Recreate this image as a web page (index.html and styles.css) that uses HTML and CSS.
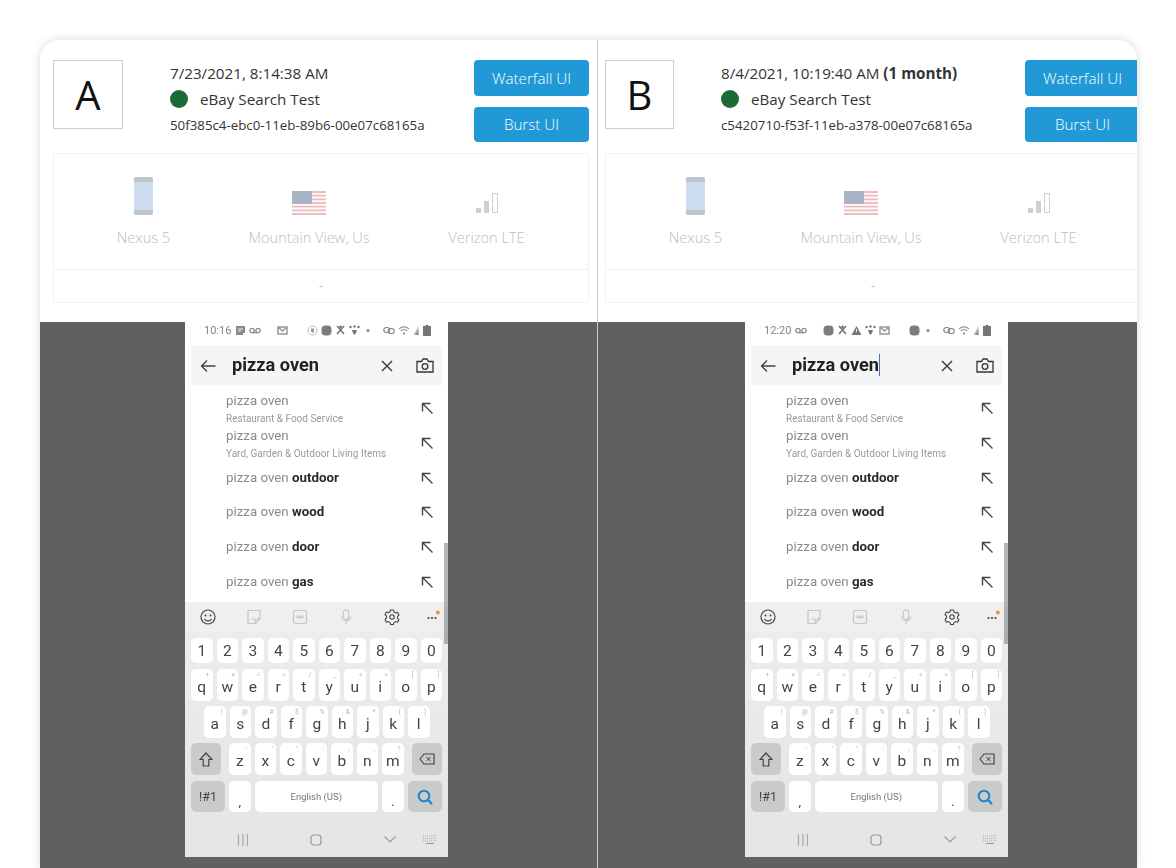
FILE: index.html
```html
<!DOCTYPE html>
<html lang="en">
  <head>
    <meta charset="UTF-8" />
    <meta name="viewport" content="width=device-width, initial-scale=1.0" />
    <title>Compare tests</title>
    <link rel="stylesheet" href="styles.css">
  </head>
  <body>
    <!-- Shared icons -->
    <svg class="icon-defs" aria-hidden="true">
      <symbol id="i-doc" viewBox="0 0 11 11"><path d="M1 1h9v7H8v2H1z" fill="#8a8a8a"/><path d="M3 4h5M3 6h3" stroke="#eee"/></symbol>
      <symbol id="i-vm" viewBox="0 0 12 11"><circle cx="3" cy="5.5" r="2.2" fill="none" stroke="#888" stroke-width="1.2"/><circle cx="9" cy="5.5" r="2.2" fill="none" stroke="#888" stroke-width="1.2"/><path d="M3 7.7h6" stroke="#888" stroke-width="1.2"/></symbol>
      <symbol id="i-mail" viewBox="0 0 11 11"><path d="M1 2h9v7H1zM1 2l4.5 4L10 2" fill="none" stroke="#999" stroke-width="1.5"/></symbol>
      <symbol id="i-shield" viewBox="0 0 11 11"><circle cx="5.5" cy="5.5" r="4.5" fill="none" stroke="#bbb"/><path d="M4 3.5h3v3L5.5 8 4 6.500z" fill="#999"/></symbol>
      <symbol id="i-blob" viewBox="0 0 11 11"><rect x="0.500" y="0.500" width="10" height="10" rx="4" fill="#7c7c7c"/></symbol>
      <symbol id="i-cross" viewBox="0 0 11 11"><path d="M2 1l7 8M9 1L2 9" stroke="#777" stroke-width="1.6"/><circle cx="5.500" cy="2" r="1.400" fill="#777"/></symbol>
      <symbol id="i-paw" viewBox="0 0 11 11"><path d="M3 5h5l-1 3-1.500 2L4 8z" fill="#777"/><circle cx="1.500" cy="2" r="1.200" fill="#777"/><circle cx="5.500" cy="1.500" r="1.200" fill="#777"/><circle cx="9.500" cy="2" r="1.200" fill="#777"/></symbol>
      <symbol id="i-warn" viewBox="0 0 11 11"><path d="M5.500 1L10.500 10h-10z" fill="#777"/><path d="M5.500 4v3" stroke="#eee"/></symbol>
      <symbol id="i-dot" viewBox="0 0 4 11"><circle cx="2" cy="5.500" r="1.500" fill="#888"/></symbol>
      <symbol id="i-link" viewBox="0 0 12 11"><rect x="0.800" y="2.500" width="6" height="5" rx="2.500" fill="none" stroke="#888" stroke-width="1.200"/><rect x="5.200" y="3.500" width="6" height="5" rx="2.500" fill="none" stroke="#888" stroke-width="1.200"/></symbol>
      <symbol id="i-wifi" viewBox="0 0 12 11"><path d="M1 4a7 7 0 0 1 10 0M2.800 6a4.500 4.500 0 0 1 6.400 0" fill="none" stroke="#999" stroke-width="1.200"/><circle cx="6" cy="8.500" r="1.200" fill="#999"/></symbol>
      <symbol id="i-bars" viewBox="0 0 6 11"><path d="M5.500 1v9H0.500z" fill="#bbb"/><path d="M5.500 5v5H2.500z" fill="#888"/></symbol>
      <symbol id="i-batt" viewBox="0 0 8 11"><path d="M2.500 0h3v1H8v10H0V1h2.500z" fill="#777"/></symbol>

      <symbol id="i-back" viewBox="0 0 16 14"><path d="M15.500 7H1.500M7 1.500L1.500 7 7 12.500" fill="none" stroke="#444" stroke-width="1.400"/></symbol>
      <symbol id="i-x" viewBox="0 0 12 12"><path d="M1 1l10 10M11 1L1 11" stroke="#444" stroke-width="1.500"/></symbol>
      <symbol id="i-camera" viewBox="0 0 18 15"><path d="M1 3.500h4.500L7 1h4l1.500 2.500H17V14H1z" fill="none" stroke="#333" stroke-width="1.300"/><circle cx="9" cy="8.500" r="2.800" fill="none" stroke="#333" stroke-width="1.300"/></symbol>
      <symbol id="i-fill" viewBox="0 0 12 12"><path d="M1 1.500h8.500M1.500 1v8.500M1.500 1.500l10 10" fill="none" stroke="#444" stroke-width="1.400"/></symbol>

      <symbol id="i-smile" viewBox="0 0 16 16"><circle cx="8" cy="8" r="7" fill="none" stroke="#444" stroke-width="1.200"/><circle cx="5.500" cy="6.500" r="1" fill="#444"/><circle cx="10.500" cy="6.500" r="1" fill="#444"/><path d="M4.500 10a4 4 0 0 0 7 0" fill="none" stroke="#444" stroke-width="1.200"/></symbol>
      <symbol id="i-sticker" viewBox="0 0 16 16"><path d="M2 1.500h12v8L9.500 14.500H2z" fill="none" stroke="#c6c6c6" stroke-width="1.200"/><path d="M5.500 9.500a3 3 0 0 0 4 0" fill="none" stroke="#c6c6c6"/><path d="M9 14v-3l5-2" fill="none" stroke="#c6c6c6"/></symbol>
      <symbol id="i-gif" viewBox="0 0 16 16"><rect x="1.500" y="1.500" width="13" height="13" rx="2" fill="none" stroke="#c6c6c6" stroke-width="1.200"/><path d="M4.500 8h7" stroke="#c6c6c6" stroke-width="3" stroke-dasharray="2 .5"/></symbol>
      <symbol id="i-mic" viewBox="0 0 16 18"><rect x="5" y="1" width="6" height="11" rx="3" fill="none" stroke="#c6c6c6" stroke-width="1.200"/><path d="M3 8.500a5 5 0 0 0 10 0M8 13.500V17" fill="none" stroke="#c6c6c6" stroke-width="1.200"/></symbol>
      <symbol id="i-gear" viewBox="0 0 16 16"><path d="M6.500 1h3l.4 2 1.700 1 2-.7 1.400 2.700-1.500 1.300v2l1.500 1.300-1.400 2.700-2-.7-1.700 1-.4 2h-3l-.4-2-1.700-1-2 .7-1.400-2.700L2.500 9V7L1 5.700 2.400 3l2 .7 1.700-1z" fill="none" stroke="#444" stroke-width="1.100" stroke-linejoin="round"/><circle cx="8" cy="8" r="2.200" fill="none" stroke="#444" stroke-width="1.100"/></symbol>
      <symbol id="i-more" viewBox="0 0 20 20"><circle cx="2.500" cy="11" r="1.100" fill="#444"/><circle cx="6" cy="11" r="1.100" fill="#444"/><circle cx="9.500" cy="11" r="1.100" fill="#444"/><circle cx="11.800" cy="5.500" r="2" fill="#e8923c"/></symbol>

      <symbol id="i-shift" viewBox="0 0 14 15"><path d="M7 1l6 6.500H9.800V14H4.200V7.500H1z" fill="none" stroke="#444" stroke-width="1.200"/></symbol>
      <symbol id="i-del" viewBox="0 0 16 12"><path d="M5 1h10v10H5L1 6z" fill="none" stroke="#444" stroke-width="1.200" stroke-linejoin="round"/><path d="M7.500 4l4 4M11.500 4l-4 4" stroke="#444"/></symbol>
      <symbol id="i-search" viewBox="0 0 16 16"><circle cx="7" cy="7" r="5.300" fill="none" stroke="#1f84c8" stroke-width="2"/><path d="M10.800 10.800L15 15" stroke="#1f84c8" stroke-width="2.200"/></symbol>

      <symbol id="i-recent" viewBox="0 0 12 14"><path d="M1.500 1v12M6 1v12M10.500 1v12" stroke="#aaa" stroke-width="1.200"/></symbol>
      <symbol id="i-home" viewBox="0 0 12 12"><rect x="1" y="1" width="10" height="10" rx="3" fill="none" stroke="#999" stroke-width="1.200"/></symbol>
      <symbol id="i-down" viewBox="0 0 12 7"><path d="M.5 .5L6 6l5.500-5.500" fill="none" stroke="#999" stroke-width="1.200"/></symbol>
      <symbol id="i-kbd" viewBox="0 0 14 9"><path d="M0 1h14M0 3.500h14M0 6h14" stroke="#aaa" stroke-dasharray="1 1"/><path d="M3 8.500h8" stroke="#999"/></symbol>

      <symbol id="i-device" viewBox="0 0 19 38"><rect width="19" height="38" rx="2" fill="#cddcee"/><path d="M0 5V2a2 2 0 0 1 2-2h15a2 2 0 0 1 2 2v3zM0 33h19v3a2 2 0 0 1-2 2H2a2 2 0 0 1-2-2z" fill="#c1c5cc"/></symbol>
      <symbol id="i-flag" viewBox="0 0 34 24">
        <rect width="34" height="24" fill="#fbfbfb"/>
        <path d="M0 1h34M0 4.700h34M0 8.400h34M0 12h34M0 15.700h34M0 19.400h34M0 23h34" stroke="#f0bcc0" stroke-width="1.800"/>
        <rect width="20" height="13" fill="#aab3c6"/>
      </symbol>
      <symbol id="i-signal" viewBox="0 0 22 20"><rect y="15" width="5" height="5" fill="#cfcfcf"/><rect x="8" y="8" width="5" height="12" fill="#cfcfcf"/><rect x="16.500" y=".5" width="5" height="19" fill="none" stroke="#cfcfcf"/></symbol>
    </svg>

    <main class="compare">
      <!-- Test A -->
      <section class="panel">
        <div class="panel__head">
          <div class="summary">
            <div class="summary__letter">A</div>
            <div class="summary__info">
              <p class="summary__line">7/23/2021, 8:14:38 AM</p>
              <p class="summary__line summary__line--name"><span class="summary__dot"></span>eBay Search Test</p>
              <p class="summary__line summary__line--id">50f385c4-ebc0-11eb-89b6-00e07c68165a</p>
            </div>
            <div class="summary__buttons">
              <button class="summary__button">Waterfall UI</button>
              <button class="summary__button">Burst UI</button>
            </div>
          </div>
          <div class="device">
            <div class="device__row">
              <div class="device__item">
                <div class="device__icon"><svg class="icon-phone"><use href="#i-device"/></svg></div>
                <span class="device__label">Nexus 5</span>
              </div>
              <div class="device__item">
                <div class="device__icon"><svg class="icon-flag"><use href="#i-flag"/></svg></div>
                <span class="device__label">Mountain View, Us</span>
              </div>
              <div class="device__item">
                <div class="device__icon device__icon--signal"><svg class="icon-signal"><use href="#i-signal"/></svg></div>
                <span class="device__label">Verizon LTE</span>
              </div>
            </div>
            <div class="device__foot">-</div>
          </div>
        </div>
        <div class="stage">
          <div class="phone">
            <div class="status">
              <span class="status__time">10:16</span>
              <svg class="st"><use href="#i-doc"/></svg>
              <svg class="st st--wide"><use href="#i-vm"/></svg>
              <svg class="st st--gap15"><use href="#i-mail"/></svg>
              <svg class="st st--gap19"><use href="#i-shield"/></svg>
              <svg class="st"><use href="#i-blob"/></svg>
              <svg class="st"><use href="#i-cross"/></svg>
              <svg class="st"><use href="#i-paw"/></svg>
              <svg class="st st--dot"><use href="#i-dot"/></svg>
              <div class="status__right">
                <svg class="st st--wide"><use href="#i-link"/></svg>
                <svg class="st st--wide"><use href="#i-wifi"/></svg>
                <svg class="st st--bars"><use href="#i-bars"/></svg>
                <svg class="st st--batt"><use href="#i-batt"/></svg>
              </div>
            </div>
            <div class="search">
              <svg class="search__back"><use href="#i-back"/></svg>
              <span class="search__text">pizza oven</span>
              <svg class="search__clear"><use href="#i-x"/></svg>
              <svg class="search__camera"><use href="#i-camera"/></svg>
            </div>
            <ul class="suggest">
              <li class="suggest__row"><div><span class="suggest__title">pizza oven</span><span class="suggest__sub">Restaurant &amp; Food Service</span></div><svg class="suggest__fill"><use href="#i-fill"/></svg></li>
              <li class="suggest__row"><div><span class="suggest__title">pizza oven</span><span class="suggest__sub">Yard, Garden &amp; Outdoor Living Items</span></div><svg class="suggest__fill"><use href="#i-fill"/></svg></li>
              <li class="suggest__row"><div><span class="suggest__title">pizza oven <b>outdoor</b></span></div><svg class="suggest__fill"><use href="#i-fill"/></svg></li>
              <li class="suggest__row"><div><span class="suggest__title">pizza oven <b>wood</b></span></div><svg class="suggest__fill"><use href="#i-fill"/></svg></li>
              <li class="suggest__row"><div><span class="suggest__title">pizza oven <b>door</b></span></div><svg class="suggest__fill"><use href="#i-fill"/></svg></li>
              <li class="suggest__row"><div><span class="suggest__title">pizza oven <b>gas</b></span></div><svg class="suggest__fill"><use href="#i-fill"/></svg></li>
            </ul>
            <div class="tools">
              <svg class="tools__icon"><use href="#i-smile"/></svg>
              <svg class="tools__icon"><use href="#i-sticker"/></svg>
              <svg class="tools__icon"><use href="#i-gif"/></svg>
              <svg class="tools__icon"><use href="#i-mic"/></svg>
              <svg class="tools__icon"><use href="#i-gear"/></svg>
              <svg class="tools__more"><use href="#i-more"/></svg>
            </div>
            <div class="keys">
              <div class="keys__row keys__row--num">
                <span class="key">1</span><span class="key">2</span><span class="key">3</span><span class="key">4</span><span class="key">5</span><span class="key">6</span><span class="key">7</span><span class="key">8</span><span class="key">9</span><span class="key">0</span>
              </div>
              <div class="keys__row">
                <span class="key"><i>+</i>q</span><span class="key"><i>×</i>w</span><span class="key"><i>÷</i>e</span><span class="key"><i>=</i>r</span><span class="key"><i>/</i>t</span><span class="key"><i>_</i>y</span><span class="key"><i>&lt;</i>u</span><span class="key"><i>&gt;</i>i</span><span class="key"><i>[</i>o</span><span class="key"><i>]</i>p</span>
              </div>
              <div class="keys__row keys__row--home">
                <span class="key"><i>!</i>a</span><span class="key"><i>@</i>s</span><span class="key"><i>#</i>d</span><span class="key"><i>$</i>f</span><span class="key"><i>%</i>g</span><span class="key"><i>&amp;</i>h</span><span class="key"><i>*</i>j</span><span class="key"><i>(</i>k</span><span class="key"><i>)</i>l</span>
              </div>
              <div class="keys__row">
                <span class="key key--fn key--shift"><svg class="key__shift"><use href="#i-shift"/></svg></span>
                <span class="key"><i>-</i>z</span><span class="key"><i>'</i>x</span><span class="key"><i>"</i>c</span><span class="key"><i>:</i>v</span><span class="key"><i>;</i>b</span><span class="key"><i>,</i>n</span><span class="key"><i>?</i>m</span>
                <span class="key key--fn key--del"><svg class="key__del"><use href="#i-del"/></svg></span>
              </div>
              <div class="keys__row keys__row--last">
                <span class="key key--fn key--sym">!#1</span>
                <span class="key key--low">,</span>
                <span class="key key--space">English (US)</span>
                <span class="key key--low">.</span>
                <span class="key key--fn key--go"><svg class="key__search"><use href="#i-search"/></svg></span>
              </div>
            </div>
            <div class="nav">
              <svg class="nav__recent"><use href="#i-recent"/></svg>
              <svg class="nav__home"><use href="#i-home"/></svg>
              <svg class="nav__down"><use href="#i-down"/></svg>
              <svg class="nav__kbd"><use href="#i-kbd"/></svg>
            </div>
            <div class="phone__scroll"></div>
          </div>
        </div>
      </section>

      <!-- Test B -->
      <section class="panel panel--b">
        <div class="panel__head">
          <div class="summary">
            <div class="summary__letter">B</div>
            <div class="summary__info">
              <p class="summary__line">8/4/2021, 10:19:40 AM <b>(1 month)</b></p>
              <p class="summary__line summary__line--name"><span class="summary__dot"></span>eBay Search Test</p>
              <p class="summary__line summary__line--id">c5420710-f53f-11eb-a378-00e07c68165a</p>
            </div>
            <div class="summary__buttons">
              <button class="summary__button">Waterfall UI</button>
              <button class="summary__button">Burst UI</button>
            </div>
          </div>
          <div class="device">
            <div class="device__row">
              <div class="device__item">
                <div class="device__icon"><svg class="icon-phone"><use href="#i-device"/></svg></div>
                <span class="device__label">Nexus 5</span>
              </div>
              <div class="device__item">
                <div class="device__icon"><svg class="icon-flag"><use href="#i-flag"/></svg></div>
                <span class="device__label">Mountain View, Us</span>
              </div>
              <div class="device__item">
                <div class="device__icon device__icon--signal"><svg class="icon-signal"><use href="#i-signal"/></svg></div>
                <span class="device__label">Verizon LTE</span>
              </div>
            </div>
            <div class="device__foot">-</div>
          </div>
        </div>
        <div class="stage">
          <div class="phone">
            <div class="status">
              <span class="status__time">12:20</span>
              <svg class="st st--wide"><use href="#i-vm"/></svg>
              <svg class="st st--gap15"><use href="#i-blob"/></svg>
              <svg class="st"><use href="#i-cross"/></svg>
              <svg class="st"><use href="#i-warn"/></svg>
              <svg class="st"><use href="#i-paw"/></svg>
              <svg class="st"><use href="#i-mail"/></svg>
              <svg class="st st--gap19"><use href="#i-blob"/></svg>
              <svg class="st st--dot"><use href="#i-dot"/></svg>
              <div class="status__right">
                <svg class="st st--wide"><use href="#i-link"/></svg>
                <svg class="st st--wide"><use href="#i-wifi"/></svg>
                <svg class="st st--bars"><use href="#i-bars"/></svg>
                <svg class="st st--batt"><use href="#i-batt"/></svg>
              </div>
            </div>
            <div class="search">
              <svg class="search__back"><use href="#i-back"/></svg>
              <span class="search__text search__text--caret">pizza oven</span>
              <svg class="search__clear"><use href="#i-x"/></svg>
              <svg class="search__camera"><use href="#i-camera"/></svg>
            </div>
            <ul class="suggest">
              <li class="suggest__row"><div><span class="suggest__title">pizza oven</span><span class="suggest__sub">Restaurant &amp; Food Service</span></div><svg class="suggest__fill"><use href="#i-fill"/></svg></li>
              <li class="suggest__row"><div><span class="suggest__title">pizza oven</span><span class="suggest__sub">Yard, Garden &amp; Outdoor Living Items</span></div><svg class="suggest__fill"><use href="#i-fill"/></svg></li>
              <li class="suggest__row"><div><span class="suggest__title">pizza oven <b>outdoor</b></span></div><svg class="suggest__fill"><use href="#i-fill"/></svg></li>
              <li class="suggest__row"><div><span class="suggest__title">pizza oven <b>wood</b></span></div><svg class="suggest__fill"><use href="#i-fill"/></svg></li>
              <li class="suggest__row"><div><span class="suggest__title">pizza oven <b>door</b></span></div><svg class="suggest__fill"><use href="#i-fill"/></svg></li>
              <li class="suggest__row"><div><span class="suggest__title">pizza oven <b>gas</b></span></div><svg class="suggest__fill"><use href="#i-fill"/></svg></li>
            </ul>
            <div class="tools">
              <svg class="tools__icon"><use href="#i-smile"/></svg>
              <svg class="tools__icon"><use href="#i-sticker"/></svg>
              <svg class="tools__icon"><use href="#i-gif"/></svg>
              <svg class="tools__icon"><use href="#i-mic"/></svg>
              <svg class="tools__icon"><use href="#i-gear"/></svg>
              <svg class="tools__more"><use href="#i-more"/></svg>
            </div>
            <div class="keys">
              <div class="keys__row keys__row--num">
                <span class="key">1</span><span class="key">2</span><span class="key">3</span><span class="key">4</span><span class="key">5</span><span class="key">6</span><span class="key">7</span><span class="key">8</span><span class="key">9</span><span class="key">0</span>
              </div>
              <div class="keys__row">
                <span class="key"><i>+</i>q</span><span class="key"><i>×</i>w</span><span class="key"><i>÷</i>e</span><span class="key"><i>=</i>r</span><span class="key"><i>/</i>t</span><span class="key"><i>_</i>y</span><span class="key"><i>&lt;</i>u</span><span class="key"><i>&gt;</i>i</span><span class="key"><i>[</i>o</span><span class="key"><i>]</i>p</span>
              </div>
              <div class="keys__row keys__row--home">
                <span class="key"><i>!</i>a</span><span class="key"><i>@</i>s</span><span class="key"><i>#</i>d</span><span class="key"><i>$</i>f</span><span class="key"><i>%</i>g</span><span class="key"><i>&amp;</i>h</span><span class="key"><i>*</i>j</span><span class="key"><i>(</i>k</span><span class="key"><i>)</i>l</span>
              </div>
              <div class="keys__row">
                <span class="key key--fn key--shift"><svg class="key__shift"><use href="#i-shift"/></svg></span>
                <span class="key"><i>-</i>z</span><span class="key"><i>'</i>x</span><span class="key"><i>"</i>c</span><span class="key"><i>:</i>v</span><span class="key"><i>;</i>b</span><span class="key"><i>,</i>n</span><span class="key"><i>?</i>m</span>
                <span class="key key--fn key--del"><svg class="key__del"><use href="#i-del"/></svg></span>
              </div>
              <div class="keys__row keys__row--last">
                <span class="key key--fn key--sym">!#1</span>
                <span class="key key--low">,</span>
                <span class="key key--space">English (US)</span>
                <span class="key key--low">.</span>
                <span class="key key--fn key--go"><svg class="key__search"><use href="#i-search"/></svg></span>
              </div>
            </div>
            <div class="nav">
              <svg class="nav__recent"><use href="#i-recent"/></svg>
              <svg class="nav__home"><use href="#i-home"/></svg>
              <svg class="nav__down"><use href="#i-down"/></svg>
              <svg class="nav__kbd"><use href="#i-kbd"/></svg>
            </div>
            <div class="phone__scroll"></div>
          </div>
        </div>
      </section>
    </main>
  </body>
</html>
```

FILE: styles.css
```css
/* General Styles */
body {
  margin: 0;
  height: 868px;
  overflow: hidden;
  background-color: #fff;
  font-family: "Open Sans", sans-serif;
  color: #333;
}

p {
  margin: 0;
}

.icon-defs {
  display: none;
}

/* Outer card */
.compare {
  display: flex;
  width: 1097px;
  height: 828px;
  margin: 40px 0 0 40px;
  border-radius: 20px 20px 0 0;
  overflow: hidden;
  box-shadow: 0 0 10px rgba(0, 0, 0, 0.16);
}

.panel {
  display: flex;
  flex-direction: column;
  flex: none;
  width: 557px;
  border-right: 1px solid #c9c9c9;
  overflow: hidden;
}

.panel--b {
  width: 539px;
  border-right: none;
}

.panel__head {
  flex: none;
  box-sizing: border-box;
  height: 282px;
  padding: 20px 0 0 13px;
  background-color: #fff;
}

.panel--b .panel__head {
  padding-left: 7px;
}

/* Test summary */
.summary {
  display: flex;
  width: 536px;
  height: 82px;
}

.panel--b .summary {
  width: 535px;
}

.summary__letter {
  display: flex;
  justify-content: center;
  align-items: center;
  flex: none;
  box-sizing: border-box;
  width: 70px;
  height: 69px;
  border: 1px solid #cfcfcf;
  font-size: 40px;
  color: #111;
}

.panel--b .summary__letter {
  width: 69px;
}

.summary__info {
  flex: 1;
  padding: 0 0 0 47px;
}

.summary__line {
  font-size: 15.2px;
  line-height: 26px;
  white-space: nowrap;
}

.summary__line--name {
  display: flex;
  align-items: center;
}

.summary__line--id {
  font-size: 13.3px;
}

.summary__dot {
  flex: none;
  width: 18px;
  height: 18px;
  margin-right: 12px;
  border-radius: 50%;
  background-color: #1e6a35;
}

.summary__buttons {
  display: flex;
  flex-direction: column;
  gap: 11px;
  flex: none;
  width: 115px;
}

.summary__button {
  height: 36px;
  padding: 0;
  border: none;
  border-radius: 4px;
  background-color: #2099d6;
  font-family: inherit;
  font-size: 15.2px;
  font-weight: 300;
  color: #fff;
}

/* Device box */
.device {
  box-sizing: border-box;
  width: 536px;
  height: 150px;
  margin-top: 11px;
  border: 1px solid #f1f1f1;
}

.device__row {
  display: grid;
  grid-template-columns: 179px 152px 203px;
  height: 115px;
  border-bottom: 1px solid #efefef;
}

.device__item {
  display: flex;
  flex-direction: column;
  align-items: center;
  padding-top: 23px;
}

.device__icon {
  display: flex;
  align-items: flex-end;
  height: 38px;
}

.device__icon--signal {
  padding-bottom: 2px;
  height: 36px;
}

.device__label {
  margin-top: 12px;
  font-size: 14.6px;
  font-weight: 300;
  line-height: 20px;
  color: #bdbdbd;
  white-space: nowrap;
}

.device__foot {
  height: 32px;
  font-size: 12px;
  line-height: 32px;
  text-align: center;
  color: #bbb;
}

.icon-phone {
  width: 19px;
  height: 38px;
}

.icon-flag {
  width: 34px;
  height: 24px;
}

.icon-signal {
  width: 22px;
  height: 20px;
}

/* Gray stage behind the recording */
.stage {
  flex: 1;
  padding-left: 145px;
  background-color: #606060;
}

.panel--b .stage {
  padding-left: 147px;
}

.phone {
  position: relative;
  width: 263px;
  height: 535px;
  background-color: #fff;
  font-family: Roboto, sans-serif;
  filter: blur(0.35px);
}

.phone__scroll {
  position: absolute;
  top: 221px;
  right: 0;
  width: 4px;
  height: 101px;
  background-color: rgba(110, 110, 110, 0.5);
}

/* Status bar */
.status {
  display: flex;
  align-items: center;
  gap: 3px;
  box-sizing: border-box;
  height: 24px;
  padding: 0 17px 8px 19px;
}

.status__time {
  margin-right: 1px;
  font-size: 11px;
  color: #858585;
}

.status__right {
  display: flex;
  align-items: center;
  gap: 3px;
  margin-left: auto;
}

.st {
  flex: none;
  width: 11px;
  height: 11px;
}

.st--wide {
  width: 12px;
}

.st--dot {
  width: 4px;
  margin-left: 3px;
}

.st--bars {
  width: 6px;
}

.st--batt {
  width: 8px;
  margin-left: 1px;
}

.st--gap15 {
  margin-left: 13px;
}

.st--gap19 {
  margin-left: 16px;
}

/* Search field */
.search {
  display: flex;
  align-items: center;
  height: 39px;
  margin: 0 6px;
  background-color: #f3f5f6;
}

.search__back {
  flex: none;
  width: 16px;
  height: 14px;
  margin-left: 9px;
}

.search__text {
  margin: 0 0 1px 16px;
  font-size: 18.2px;
  font-weight: 700;
  line-height: 22px;
  color: #222;
}

.search__text--caret {
  margin-right: -1px;
  border-right: 1px solid #4a6fc0;
}

.search__clear {
  flex: none;
  width: 12px;
  height: 12px;
  margin-left: auto;
}

.search__camera {
  flex: none;
  width: 18px;
  height: 15px;
  margin: 0 8px 0 23px;
}

/* Suggestions */
.suggest {
  height: 217px;
  box-sizing: border-box;
  margin: 0;
  padding: 6px 15px 0 41px;
  list-style: none;
}

.suggest__row {
  display: flex;
  justify-content: space-between;
  align-items: center;
  height: 34.7px;
}

.suggest__title {
  display: block;
  font-size: 13.3px;
  line-height: 20px;
  color: #8a8a8a;
}

.suggest__title b {
  color: #2b2b2b;
}

.suggest__sub {
  display: block;
  font-size: 10px;
  line-height: 15px;
  color: #999;
}

.suggest__fill {
  flex: none;
  width: 12px;
  height: 12px;
}

/* Keyboard toolbar */
.tools {
  display: flex;
  align-items: center;
  gap: 26px;
  height: 30px;
  padding-left: 13px;
  background-color: #eef0f0;
}

.tools__icon {
  flex: none;
  width: 20px;
  height: 16px;
}

.tools__more {
  flex: none;
  width: 20px;
  height: 20px;
  margin-left: -2px;
}

/* Keyboard */
.keys {
  display: flex;
  flex-direction: column;
  padding: 6px 6px 0;
  background: linear-gradient(#ebeded, #e5e6e6);
}

.keys__row {
  display: flex;
  gap: 4px;
  height: 32px;
  margin-bottom: 5px;
}

.keys__row--num {
  height: 25px;
  margin-bottom: 6px;
}

.keys__row--home {
  padding-left: 13px;
}

.keys__row--last {
  height: 31px;
  margin: 1px 0 0;
}

.key {
  position: relative;
  display: flex;
  justify-content: center;
  align-items: center;
  box-sizing: border-box;
  flex: none;
  width: 21.5px;
  padding-top: 3px;
  border-radius: 5px;
  background-color: #fff;
  font-size: 15.5px;
  color: #444;
}

.keys__row--num .key {
  padding-top: 0;
}

.key i {
  position: absolute;
  top: 2px;
  right: 3px;
  font-size: 7px;
  font-style: normal;
  color: #b5b5b5;
}

.key--fn {
  width: 30px;
  padding-top: 0;
  background-color: #c9cbcb;
}

.key--shift {
  margin-right: 4px;
}

.key--del {
  margin-left: 4px;
}

.key--sym {
  width: 34px;
  font-size: 12.5px;
}

.key--go {
  width: 34px;
  margin-left: 0.5px;
}

.key--low {
  padding-top: 10px;
  font-size: 13px;
}

.key--space {
  width: 123.5px;
  padding-top: 0;
  font-size: 9.5px;
  color: #777;
}

.key__shift {
  width: 14px;
  height: 15px;
}

.key__del {
  width: 16px;
  height: 12px;
}

.key__search {
  width: 16px;
  height: 16px;
}

/* Navigation bar */
.nav {
  position: relative;
  display: flex;
  align-items: center;
  height: 45px;
  padding: 10px 0 0 52px;
  box-sizing: border-box;
  background-color: #e5e6e6;
}

.nav__recent {
  width: 12px;
  height: 14px;
}

.nav__home {
  width: 12px;
  height: 12px;
  margin-left: 61px;
}

.nav__down {
  width: 12px;
  height: 7px;
  margin-left: 62px;
}

.nav__kbd {
  width: 14px;
  height: 9px;
  margin-left: 27px;
}
```
